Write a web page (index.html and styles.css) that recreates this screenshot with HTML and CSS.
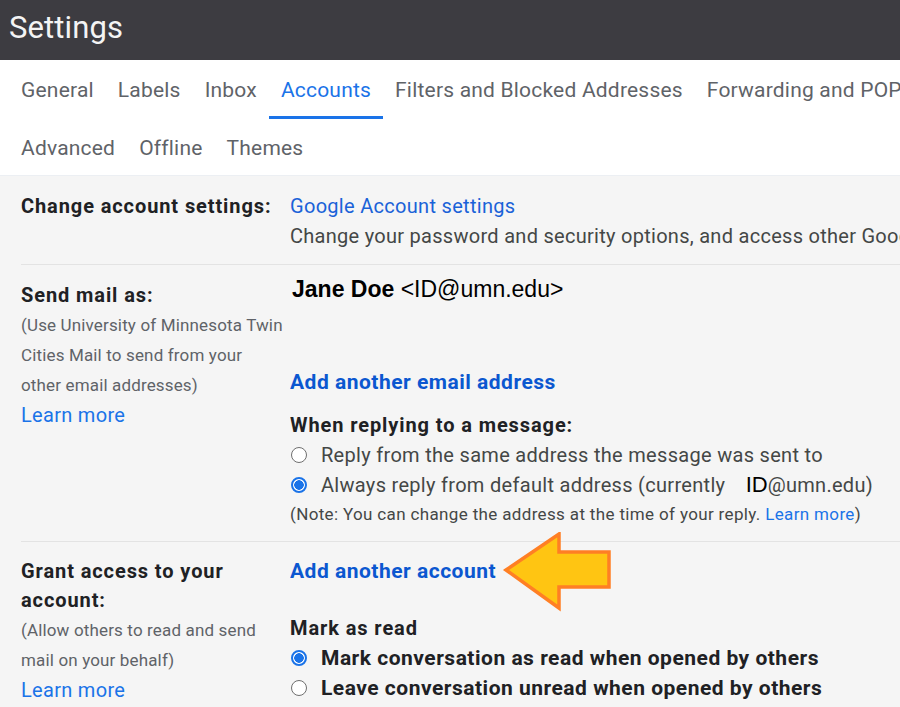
FILE: index.html
```html
<!DOCTYPE html>
<html lang="en">
<head>
<meta charset="utf-8">
<title>Settings</title>
<link rel="stylesheet" href="styles.css">
</head>
<body>
  <header class="topbar">
    <h1 class="topbar-title">Settings</h1>
  </header>

  <nav class="tabs">
    <div class="tab-row tab-row-first">
      <a class="tab">General</a>
      <a class="tab">Labels</a>
      <a class="tab">Inbox</a>
      <a class="tab tab-active">Accounts</a>
      <a class="tab">Filters and Blocked Addresses</a>
      <a class="tab">Forwarding and POP/IMAP</a>
    </div>
    <div class="tab-row tab-row-second">
      <a class="tab">Advanced</a>
      <a class="tab">Offline</a>
      <a class="tab">Themes</a>
    </div>
  </nav>

  <main class="content">
    <section class="setting setting-account">
      <div class="setting-label">
        <div class="label-title">Change account settings:</div>
      </div>
      <div class="setting-value">
        <a class="link">Google Account settings</a>
        <div class="plain">Change your password and security options, and access other Google services.</div>
      </div>
    </section>

    <section class="setting setting-send">
      <div class="setting-label label-send">
        <div class="label-title">Send mail as:</div>
        <div class="label-note">(Use University of Minnesota Twin Cities Mail to send from your other email addresses)</div>
        <a class="link learn">Learn more</a>
      </div>
      <div class="setting-value">
        <div class="identity"><b>Jane Doe</b> &lt;ID@umn.edu&gt;</div>
        <a class="link link-strong add-email">Add another email address</a>
        <div class="subhead subhead-reply">When replying to a message:</div>
        <label class="option">
          <span class="radio"></span>
          <span>Reply from the same address the message was sent to</span>
        </label>
        <label class="option">
          <span class="radio radio-on"></span>
          <span>Always reply from default address (currently <span class="id-tag">ID</span>@umn.edu)</span>
        </label>
        <div class="note">(Note: You can change the address at the time of your reply. <a class="link">Learn more</a>)</div>
      </div>
    </section>

    <section class="setting setting-grant">
      <div class="setting-label">
        <div class="label-title">Grant access to your account:</div>
        <div class="label-note">(Allow others to read and send mail on your behalf)</div>
        <a class="link learn">Learn more</a>
      </div>
      <div class="setting-value">
        <a class="link link-strong">Add another account</a>
        <div class="subhead subhead-mark">Mark as read</div>
        <label class="option option-strong">
          <span class="radio radio-on"></span>
          <span>Mark conversation as read when opened by others</span>
        </label>
        <label class="option option-strong">
          <span class="radio"></span>
          <span>Leave conversation unread when opened by others</span>
        </label>
      </div>
    </section>

    <!-- callout arrow pointing at "Add another account" -->
    <svg class="callout" width="112" height="82" viewBox="0 0 112 82">
      <polygon points="4,38 57,2 57,20 107,20 107,55 57,55 57,76"
               fill="#ffc512" stroke="#ff7f24" stroke-width="3.5" stroke-linejoin="miter"/>
    </svg>
  </main>
</body>
</html>
```

FILE: styles.css
```css
* {
  box-sizing: border-box;
}

html, body {
  margin: 0;
  padding: 0;
}

body {
  width: 900px;
  height: 707px;
  overflow: hidden;
  font-family: Roboto, "Noto Sans", sans-serif;
  background: #f5f5f5;
  color: #202124;
  position: relative;
}

/* dark title bar */
.topbar {
  height: 60px;
  background: #3d3c41;
  display: flex;
  align-items: center;
  padding-left: 9px;
}

.topbar-title {
  margin: 0;
  font-size: 31px;
  font-weight: 400;
  color: #f4f4f4;
  letter-spacing: 0.1px;
  padding-bottom: 6px;
}

/* tab strip */
.tabs {
  background: #ffffff;
  padding-left: 9px;
  border-bottom: 1px solid #eceff3;
  overflow: hidden;
}

.tab-row {
  display: flex;
  white-space: nowrap;
}

.tab-row-first {
  height: 59px;
}

.tab-row-second {
  height: 56px;
}

.tab {
  display: flex;
  align-items: center;
  padding: 3px 12px 0;
  font-size: 21px;
  letter-spacing: 0.2px;
  color: #5f6368;
  border-bottom: 3px solid transparent;
  flex: none;
}

.tab-row-second .tab {
  padding-top: 2px;
  border-bottom: 0;
}

.tab-active {
  color: #1a73e8;
  border-bottom-color: #1a73e8;
}

/* settings body */
.content {
  padding: 0 0 0 21px;
}

.setting {
  display: grid;
  grid-template-columns: 269px 1fr;
  border-bottom: 1px solid #e3e3e3;
  white-space: nowrap;
}

.setting-account {
  padding: 15px 0 13px;
}

.setting-send {
  padding: 9px 0 15px;
}

.setting-grant {
  padding: 14px 0 0;
  border-bottom: 0;
}

.label-send {
  padding-top: 6px;
}

.setting-label {
  white-space: normal;
}

.label-title {
  font-size: 20px;
  font-weight: 700;
  letter-spacing: 0.9px;
  line-height: 29px;
  color: #202124;
  padding-top: 1px;
}

.label-note {
  width: 264px;
  font-size: 17px;
  letter-spacing: 0.15px;
  line-height: 30px;
  color: #5f6368;
}

.setting-value {
  display: flex;
  flex-direction: column;
  align-items: flex-start;
  overflow: hidden;
}

.link {
  color: #1a62d8;
  font-size: 20px;
  letter-spacing: 0.3px;
  line-height: 30px;
  text-decoration: none;
}

.learn {
  display: block;
  color: #1a73e8;
}

.link-strong {
  font-size: 21px;
  font-weight: 700;
  letter-spacing: 0.5px;
  color: #0b57d0;
}

.plain {
  font-size: 20px;
  letter-spacing: 0.28px;
  line-height: 30px;
  color: #444746;
}

.identity {
  font-family: "Liberation Sans", Arial, sans-serif;
  font-size: 23px;
  line-height: 30px;
  color: #000;
  margin-left: 2px;
}

.add-email {
  margin-top: 63px;
}

.subhead {
  font-size: 20px;
  font-weight: 700;
  letter-spacing: 0.9px;
  line-height: 30px;
  color: #202124;
}

.subhead-reply {
  margin-top: 13px;
}

.subhead-mark {
  margin-top: 27px;
}

.option {
  display: flex;
  align-items: center;
  gap: 14px;
  font-size: 20px;
  letter-spacing: 0.3px;
  line-height: 30px;
  color: #444746;
  padding-left: 1px;
}

.option-strong {
  font-size: 21px;
  font-weight: 700;
  letter-spacing: 0.5px;
  color: #202124;
}

.radio {
  width: 16px;
  height: 16px;
  border-radius: 50%;
  border: 1.5px solid #6f6f6f;
  background: #fff;
  flex: none;
}

.radio-on {
  border: 2px solid #1a73e8;
  background: radial-gradient(circle, #1a73e8 0 4.5px, #fff 5px);
}

.id-tag {
  font-family: "Liberation Sans", Arial, sans-serif;
  color: #000;
  font-size: 22px;
  letter-spacing: 0;
  margin-left: 15px;
}

.note {
  font-size: 17px;
  letter-spacing: 0.35px;
  line-height: 24px;
  color: #444746;
  margin-top: 2px;
}

.note .link {
  font-size: 17px;
  letter-spacing: 0.35px;
  line-height: 24px;
  color: #1a73e8;
}

/* annotation arrow overlay */
.callout {
  position: absolute;
  left: 502px;
  top: 532px;
}
```
